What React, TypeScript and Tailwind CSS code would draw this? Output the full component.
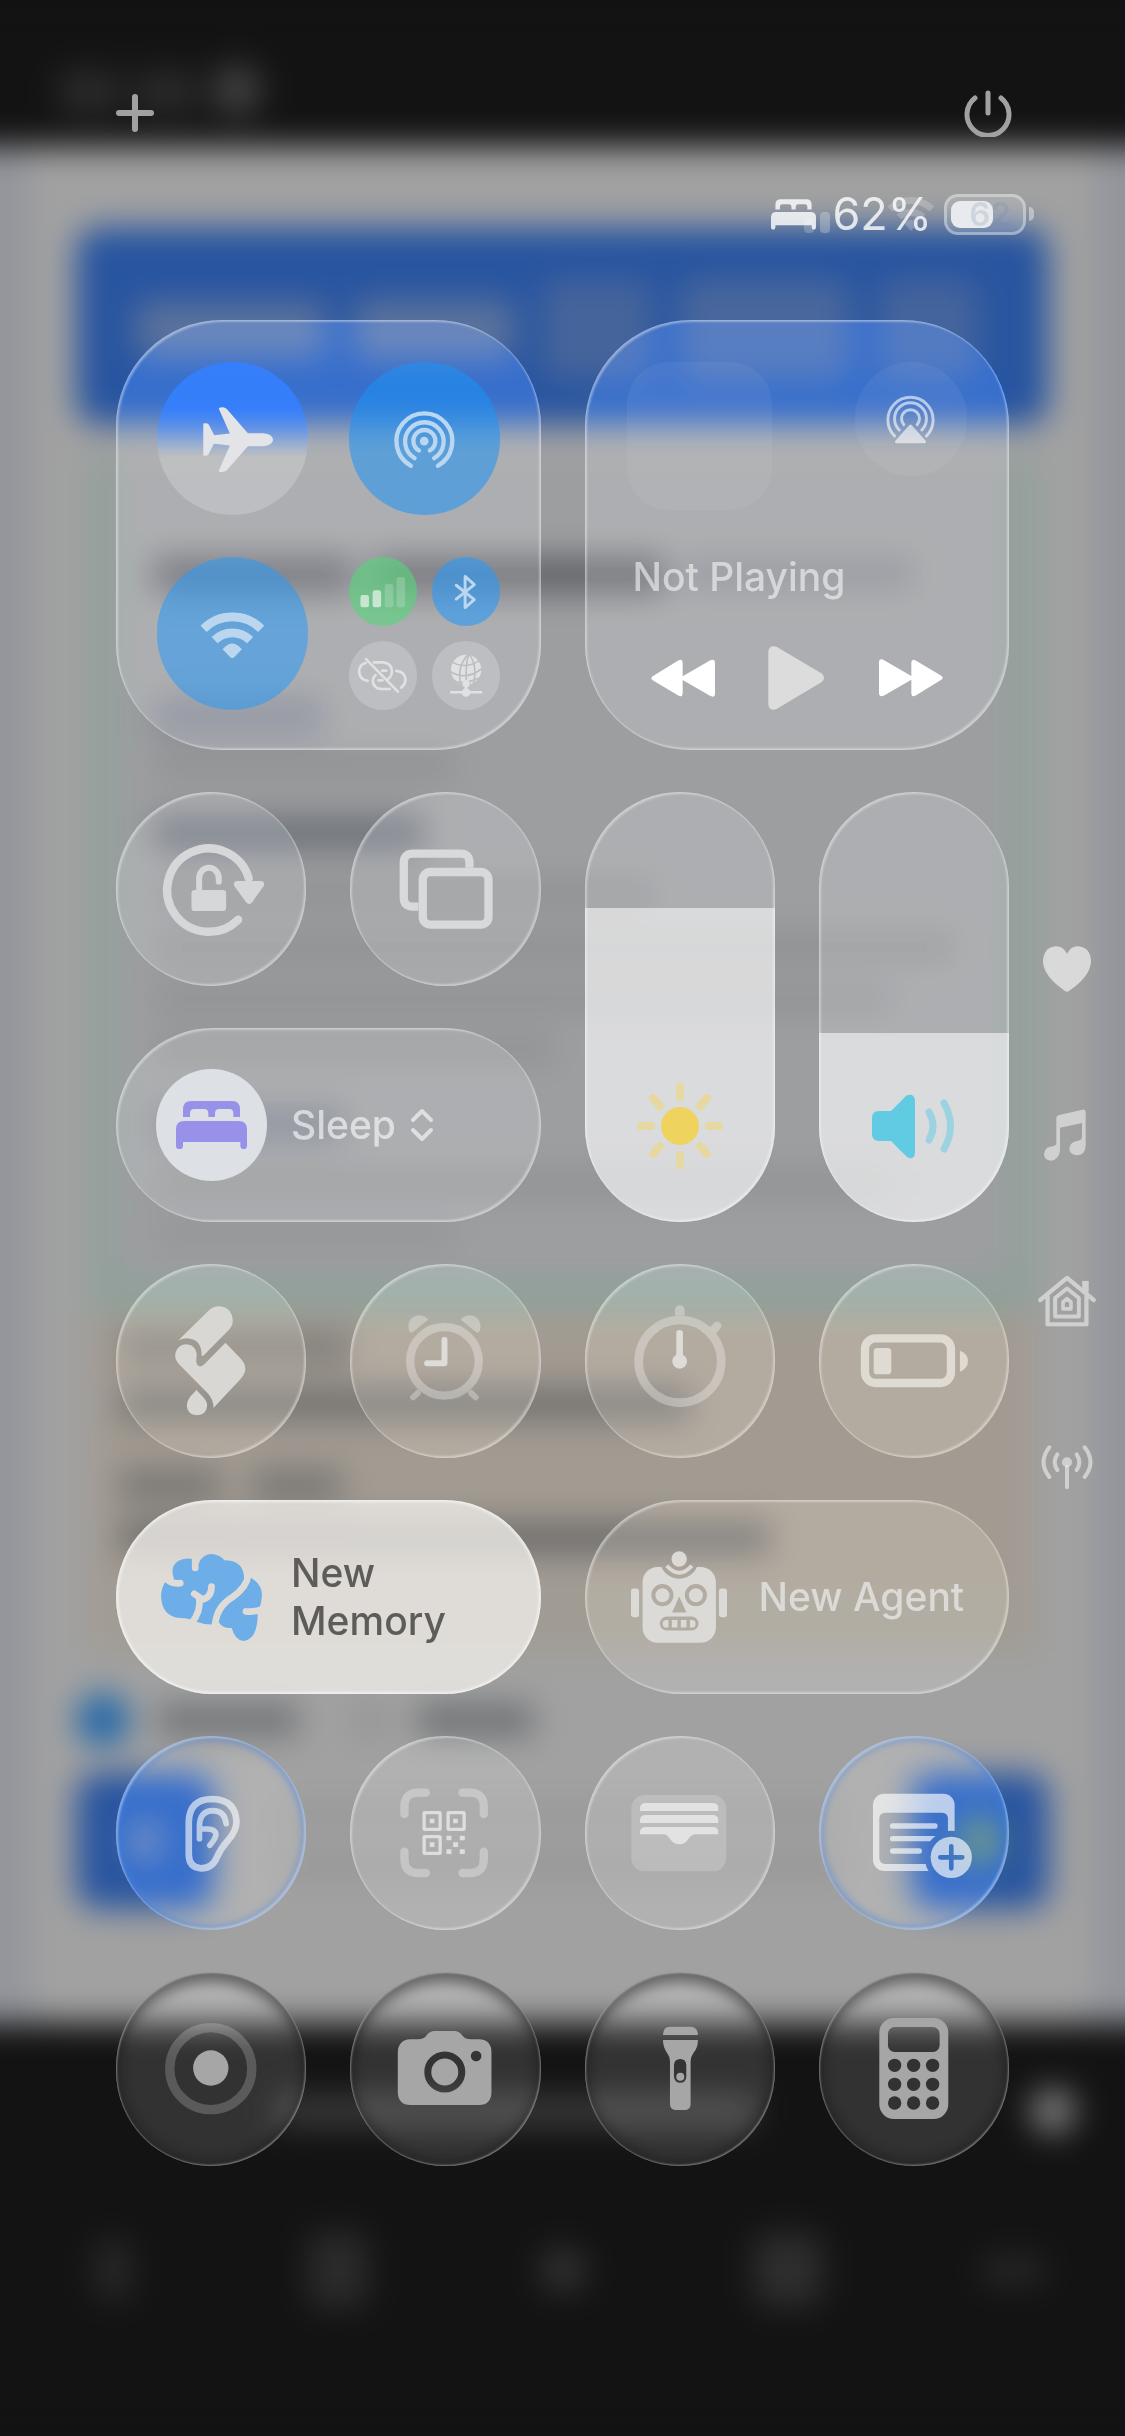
import React from "react";

const GLASS =
  "relative overflow-hidden bg-white/13 backdrop-saturate-[1.4] backdrop-brightness-[1.03] shadow-[inset_2px_2px_2px_rgba(255,255,255,0.35),inset_-2px_-2px_2px_rgba(255,255,255,0.35),inset_0_0_1px_1px_rgba(255,255,255,0.1)]";
const GLASS_BLUE =
  "relative overflow-hidden bg-white/13 backdrop-saturate-[1.4] backdrop-brightness-[1.03] shadow-[inset_2px_2px_2px_rgba(255,255,255,0.35),inset_-2px_-2px_2px_rgba(255,255,255,0.35),inset_0_0_8px_3px_rgba(70,130,225,0.6)]";
const GLASS_DARK =
  "relative overflow-hidden bg-white/13 backdrop-brightness-105 shadow-[inset_1px_1px_2px_rgba(255,255,255,0.4),inset_-1px_-1px_2px_rgba(255,255,255,0.4),inset_0_10px_14px_rgba(20,20,20,0.5),inset_0_-8px_12px_rgba(20,20,20,0.3)]";

const TONES = {
  light: `${GLASS} text-white/60`,
  blue: `${GLASS_BLUE} text-white/60`,
  dark: `${GLASS_DARK} text-[#a6a6a6]`,
};

function Icon({ box, className, children }: { box: string; className?: string; children: React.ReactNode }) {
  return (
    <svg viewBox={box} className={className ?? "h-full w-full"} fill="currentColor" aria-hidden="true">
      {children}
    </svg>
  );
}

function Stroke({ d, w, className }: { d: string; w: number; className?: string }) {
  return (
    <path d={d} fill="none" stroke="currentColor" strokeWidth={w} strokeLinecap="round" strokeLinejoin="round" className={className} />
  );
}

function Round({ label, tone = "light", children }: { label: string; tone?: keyof typeof TONES; children: React.ReactNode }) {
  return (
    <button type="button" aria-label={label} className={`h-[194px] w-full rounded-full ${TONES[tone]}`}>
      {children}
    </button>
  );
}

function Bed({ className }: { className: string }) {
  return (
    <Icon box="228 993 213 144" className={className}>
      <path d="M249 1041V1018Q249 993 274 993H396Q420 993 420 1018V1041H400V1030Q400 1017 388 1017H358Q345 1017 345 1030V1041H325V1030Q325 1017 312 1017H283Q270 1017 270 1030V1041Z" />
      <path d="M228 1127V1078Q228 1053 253 1053H416Q441 1053 441 1078V1127Q441 1137 431 1137Q421 1137 421 1127V1116H249V1127Q249 1137 238 1137Q228 1137 228 1127Z" />
    </Icon>
  );
}

function Backdrop() {
  return (
    <div aria-hidden="true" className="absolute inset-0 overflow-hidden bg-[#131313]">
      <div className="-mx-16 flex h-full flex-col bg-[#131313] blur-[16px]">
        <div className="flex h-[147px] shrink-0 items-end px-[122px] pb-[33px]">
          <div className="h-[44px] w-[64px] rounded-xl bg-[#2a2a2a]" />
          <div className="ml-3 h-[44px] w-[64px] rounded-xl bg-[#2a2a2a]" />
          <div className="ml-4 h-[48px] w-[46px] rounded-xl bg-[#404040]" />
        </div>
        <div className="h-[1876px] shrink-0 bg-[#93959c] px-[92px]">
          <div className="h-full rounded-b-[40px] bg-[#a1a1a1] px-[48px] pt-[80px]">
            <div className="flex h-[198px] items-center gap-7 rounded-[24px] bg-[#2855a0] px-[60px] pt-2">
              <div className="h-[56px] w-[190px] rounded-xl bg-[#5b729c]" />
              <div className="h-[60px] w-[160px] rounded-xl bg-[#5b729c]" />
              <div className="h-[100px] w-[110px] rounded-2xl bg-[#45649b]" />
              <div className="h-[100px] w-[170px] rounded-2xl bg-[#49679c]" />
              <div className="h-[100px] w-[100px] rounded-2xl bg-[#44649c]" />
            </div>
            <div className="mx-[14px] mt-[34px]">
              <div className="h-[852px] border-x-[26px] border-b-[34px] border-[#8fa19b] bg-[#9d9ea0] px-[38px] pt-[98px]">
                <div className="flex gap-5">
                  <div className="h-[36px] w-[200px] bg-[#66676d]" />
                  <div className="h-[36px] w-[290px] bg-[#626368]" />
                  <div className="h-[32px] w-[230px] bg-[#8a8c91]" />
                </div>
                <div className="mt-[104px] h-[38px] w-[170px] bg-[#848790]" />
                <div className="mt-[16px] h-[28px] w-[300px] bg-[#919294]" />
                <div className="mt-[36px] h-[36px] w-[270px] bg-[#6f737a]" />
                <div className="mt-[30px] h-[26px] w-[500px] bg-[#8f9092]" />
                <div className="mt-[26px] h-[28px] w-[800px] bg-[#8f9092]" />
                <div className="mt-[24px] h-[28px] w-[740px] bg-[#919294]" />
                <div className="mt-[22px] h-[28px] w-[400px] bg-[#919294]" />
                <div className="mt-[44px] h-[34px] w-[190px] bg-[#80848c]" />
                <div className="mt-[28px] h-[28px] w-[740px] bg-[#919294]" />
                <div className="mt-[24px] h-[28px] w-[300px] bg-[#959698]" />
              </div>
              <div className="h-[340px] bg-[#a29b92] px-[30px] pt-[22px]">
                <div className="h-[30px] w-[230px] bg-[#807e7a]" />
                <div className="mt-[24px] h-[34px] w-[570px] bg-[#747371]" />
                <div className="mt-[48px] flex gap-8">
                  <div className="h-[32px] w-[100px] bg-[#777673]" />
                  <div className="h-[32px] w-[90px] bg-[#777673]" />
                </div>
                <div className="mt-[20px] h-[34px] w-[650px] bg-[#6f6e6c]" />
                <div className="mt-[30px] h-[60px] bg-[#a09c94]" />
              </div>
            </div>
            <div className="mt-[42px] flex items-center">
              <div className="h-[54px] w-[54px] rounded-full bg-[#2468a8]" />
              <div className="ml-[28px] h-[32px] w-[140px] bg-[#727477]" />
              <div className="ml-[50px] h-[44px] w-[44px] rounded-full bg-[#979798]" />
              <div className="ml-[26px] h-[32px] w-[115px] bg-[#6f7174]" />
            </div>
            <div className="mt-[26px] flex justify-between">
              <div className="flex h-[136px] w-[138px] items-center justify-center rounded-[22px] bg-[#2855a0]">
                <div className="h-[36px] w-[30px] bg-[#6a7fa4]" />
              </div>
              <div className="flex w-[560px] flex-col justify-center gap-[24px]">
                <div className="h-[26px] bg-[#999999]" />
                <div className="h-[26px] bg-[#979797]" />
              </div>
              <div className="flex h-[136px] w-[138px] items-center justify-center rounded-[22px] bg-[#2855a0]">
                <div className="h-[50px] w-[44px] rounded-full bg-[#5f8277]" />
              </div>
            </div>
          </div>
        </div>
        <div className="flex-1 bg-[#131313] pt-[65px]">
          <div className="flex items-center pl-[340px]">
            <div className="h-[32px] w-[480px] bg-[#3a3a3a]" />
            <div className="ml-[274px] h-[46px] w-[46px] rounded-full bg-[#7c7c7c]" />
          </div>
          <div className="mt-[98px] grid grid-cols-5 items-center justify-items-center px-16">
            <div className="h-[60px] w-[36px] rounded-xl bg-[#282828]" />
            <div className="h-[76px] w-[60px] rounded-xl bg-[#2b2b2b]" />
            <div className="h-[46px] w-[46px] rounded-full bg-[#323232]" />
            <div className="h-[72px] w-[68px] rounded-xl bg-[#2e2e2e]" />
            <div className="h-[28px] w-[64px] rounded-xl bg-[#282828]" />
          </div>
        </div>
      </div>
    </div>
  );
}

function Connectivity() {
  return (
    <section
      aria-label="Connectivity"
      className={`col-span-2 row-span-2 grid grid-cols-2 grid-rows-2 gap-x-[41px] gap-y-[42px] rounded-[106px] px-[41px] pt-[42px] pb-[40px] ${GLASS}`}
    >
      <button
        type="button"
        aria-label="Airplane Mode"
        className="overflow-hidden rounded-full bg-linear-to-b from-[#3580ff]/90 from-30% to-white/20 to-62% text-[#e2e4e8]"
      >
        <Icon box="171 185 453 460">
          <path d="M520 419Q518 437 490 438H444L380 511Q374 517 358 515Q356 512 358 508L390 436L342 431L325 464Q320 468 310 466V370Q320 367 326 372L343 405L390 400L357 326Q356 320 370 321Q377 322 382 328L444 399H490Q518 401 520 419Z" />
        </Icon>
      </button>
      <button type="button" aria-label="AirDrop" className="overflow-hidden rounded-full bg-[#1e94f5]/55 text-[#b9d7f2]">
        <Icon box="747 185 453 460">
          <circle cx="973" cy="423" r="13" />
          <Stroke w={13} d="M957 451A33 33 0 1 1 990 451" />
          <Stroke w={13} d="M944 474A58 58 0 1 1 1003 474" />
          <Stroke w={13} d="M933 497A84 84 0 1 1 1014 497" />
        </Icon>
      </button>
      <button type="button" aria-label="Wi-Fi" className="overflow-hidden rounded-full bg-[#2a9af8]/55 text-[#bbd7ef]">
        <Icon box="171 770 453 460">
          <path d="M311 986A122 122 0 0 1 484 986M344 1020A76 76 0 0 1 451 1020" fill="none" stroke="currentColor" strokeWidth="26" />
          <path d="M368 1047Q397 1013 426 1047L402 1072Q397 1076 392 1072Z" />
        </Icon>
      </button>
      <div className="grid grid-cols-2 grid-rows-2 gap-[15px]">
        <button type="button" aria-label="Cellular Data" className="rounded-full bg-[#55d67a]/60 text-white">
          <Icon box="749 771 205 210">
            <g opacity="0.6">
              <rect x="783" y="887" width="26" height="37" rx="7" />
              <rect x="820" y="872" width="26" height="52" rx="7" />
            </g>
            <g opacity="0.18">
              <rect x="857" y="853" width="26" height="71" rx="7" />
              <rect x="893" y="832" width="26" height="92" rx="7" />
            </g>
          </Icon>
        </button>
        <button type="button" aria-label="Bluetooth" className="rounded-full bg-[#2a9af8]/60 text-[#bbd7ef]">
          <Icon box="999 771 205 210">
            <Stroke w={9} d="M1072 857L1127 901L1099 925V830L1127 855L1072 899" />
          </Icon>
        </button>
        <button type="button" aria-label="Personal Hotspot Off" className="rounded-full bg-white/20 text-[#e0e1e2]">
          <Icon box="749 1025 205 210">
            <Stroke w={8} d="M799 1092Q780 1096 779 1118Q781 1143 805 1146" />
            <Stroke w={8} d="M824 1090H852Q878 1092 879 1117Q878 1136 863 1143M849 1115H862M829 1129Q820 1136 821 1150Q826 1171 848 1171H872M838 1145H850" />
            <Stroke w={8} d="M892 1116Q918 1118 920 1142Q919 1158 907 1167" />
            <Stroke w={8} d="M800 1080L897 1179" />
          </Icon>
        </button>
        <button type="button" aria-label="VPN" className="rounded-full bg-white/20 text-[#e0e1e2]">
          <Icon box="999 1025 205 210">
            <mask id="globe">
              <circle cx="1102" cy="1113" r="46" fill="#fff" />
              <g fill="none" stroke="#000" strokeWidth="5">
                <path d="M1110 1064Q1070 1105 1088 1165M1110 1064Q1098 1100 1104 1165M1110 1064Q1140 1100 1122 1165" />
                <path d="M1060 1090Q1100 1112 1144 1084M1054 1118Q1100 1148 1152 1108M1062 1146Q1100 1160 1150 1134" />
              </g>
              <circle cx="1102" cy="1163" r="17" fill="#000" />
            </mask>
            <rect x="1050" y="1060" width="105" height="105" mask="url(#globe)" />
            <circle cx="1102" cy="1155" r="11" />
            <circle cx="1102" cy="1182" r="13" />
            <Stroke w={8} d="M1102 1155V1181M1057 1181H1148" />
          </Icon>
        </button>
      </div>
    </section>
  );
}

function Media() {
  return (
    <section aria-label="Media" className={`col-span-2 row-span-2 rounded-[106px] px-[42px] pt-[42px] text-white ${GLASS}`}>
      <div className="flex items-start justify-between">
        <div className="h-[148px] w-[145px] rounded-[42px] bg-white/5" />
        <button type="button" aria-label="AirPlay" className="h-[114px] w-[112px] rounded-full bg-white/5 text-white/60">
          <Icon box="885 189 337 342">
            <Stroke w={9} d="M1004 411A68 68 0 1 1 1100 411" />
            <Stroke w={9} d="M1018 393A48 48 0 1 1 1086 393" />
            <Stroke w={9} d="M1032 377A27 27 0 1 1 1072 377" />
            <path d="M1048 379Q1052 374 1056 379L1098 426Q1101 432 1094 433H1010Q1003 432 1006 426Z" />
          </Icon>
        </button>
      </div>
      <p className="mt-[43px] pl-[6px] text-[39px] leading-[48px] font-medium text-white/55">Not Playing</p>
      <div className="mt-[45px] flex items-center justify-between px-[24px]">
        <button type="button" aria-label="Rewind" className="h-[64px] w-[64px]">
          <Icon box="273 1037 190 190">
            <path d="M278 1127L354 1080Q366 1074 367 1086V1127L448 1080Q463 1073 463 1088V1178Q463 1192 448 1185L367 1138V1178Q366 1191 354 1184L278 1139Q270 1133 278 1127Z" />
          </Icon>
        </button>
        <button type="button" aria-label="Play" className="h-[64px] w-[57px] text-[#dcdcdc]">
          <Icon box="636 1039 169 192">
            <path d="M636 1057Q638 1034 662 1042L795 1121Q812 1134 795 1148L662 1227Q638 1237 636 1214Z" />
          </Icon>
        </button>
        <button type="button" aria-label="Fast Forward" className="h-[64px] w-[64px]">
          <Icon box="273 1037 190 190" className="h-full w-full rotate-180">
            <path d="M278 1127L354 1080Q366 1074 367 1086V1127L448 1080Q463 1073 463 1088V1178Q463 1192 448 1185L367 1138V1178Q366 1191 354 1184L278 1139Q270 1133 278 1127Z" />
          </Icon>
        </button>
      </div>
    </section>
  );
}

function Slider({ label, value, fill, children }: { label: string; value: number; fill: string; children: React.ReactNode }) {
  return (
    <div className={`row-span-2 flex flex-col justify-end rounded-full ${GLASS}`}>
      <div className={`flex flex-col items-center justify-end bg-white/55 pb-[53px] ${fill}`}>{children}</div>
      <input aria-label={label} type="range" min={0} max={100} defaultValue={value} className="absolute inset-0 h-full w-full opacity-0" />
    </div>
  );
}

function SideRail() {
  return (
    <nav aria-label="Pages" className="flex w-[116px] shrink-0 flex-col items-center gap-[106px] pt-[619px] text-white/50">
      <button type="button" aria-label="Favorites" className="flex h-[60px] w-[60px] items-center justify-center text-white/60">
        <Icon box="1452 529 144 138" className="h-[46px] w-[48px]">
          <path d="M1524 552Q1536 529 1558 530Q1596 534 1596 578Q1592 622 1530 664Q1524 668 1518 664Q1456 622 1452 578Q1452 534 1490 530Q1512 529 1524 552Z" />
        </Icon>
      </button>
      <button type="button" aria-label="Music" className="flex h-[60px] w-[60px] items-center justify-center pr-[4px]">
        <Icon box="1452 1016 126 156" className="h-[52px] w-[42px]">
          <path d="M1489 1044Q1489 1036 1498 1034L1567 1018Q1577 1016 1577 1027V1125Q1576 1154 1552 1155Q1528 1153 1528 1135Q1530 1116 1550 1112Q1566 1110 1566 1100V1058L1500 1072V1140Q1498 1168 1473 1171Q1452 1169 1452 1151Q1454 1132 1472 1129Q1489 1126 1489 1120Z" />
        </Icon>
      </button>
      <button type="button" aria-label="Home" className="flex h-[60px] w-[60px] items-center justify-center">
        <Icon box="1436 109 176 156" className="h-[52px] w-[58px]">
          <mask id="home">
            <g fill="none" stroke="#fff" strokeLinecap="round" strokeLinejoin="round">
              <path strokeWidth="13" d="M1443 184L1524 117L1605 184M1465 172V258H1583V172" />
              <path strokeWidth="20" strokeLinecap="butt" d="M1580 160V126" />
              <path strokeWidth="12" d="M1488 178L1524 149L1560 178V234H1488Z" />
              <path strokeWidth="11" d="M1512 190L1524 180L1536 190V211H1512Z" />
            </g>
          </mask>
          <rect x="1436" y="109" width="176" height="156" mask="url(#home)" />
        </Icon>
      </button>
      <button type="button" aria-label="Connectivity page" className="flex h-[60px] w-[60px] items-center justify-center">
        <Icon box="1442 612 160 138" className="h-[46px] w-[54px]">
          <circle cx="1522" cy="667" r="15" />
          <Stroke w={12} d="M1522 682V742M1493 643Q1477 667 1493 690M1551 643Q1567 667 1551 690M1469 622Q1434 667 1469 711M1575 622Q1610 667 1575 711" />
        </Icon>
      </button>
    </nav>
  );
}

export default function App() {
  return (
    <div className="relative min-h-screen overflow-hidden font-['Inter','Liberation_Sans',sans-serif]">
      <Backdrop />
      <div className="relative">
        <header className="px-[113px] pt-[88px]">
          <div className="flex h-[50px] items-center justify-between text-[#a1a1a1]">
            <button type="button" aria-label="Add a Control" className="h-[44px] w-[44px]">
              <Icon box="0 0 44 44">
                <Stroke w={6} d="M22 6V38M6 22H38" />
              </Icon>
            </button>
            <button type="button" aria-label="Power" className="h-[48px] w-[48px]">
              <Icon box="0 0 48 48">
                <Stroke w={5} d="M11 9A21 21 0 1 0 37 9M24 4V24" />
              </Icon>
            </button>
          </div>
        </header>
        <div className="mt-[50px] flex h-[52px] items-center justify-end pr-[91px] text-white/80">
          <Bed className="h-[31px] w-[45px]" />
          <div className="-ml-3 flex items-end gap-[6px] pt-[16px]">
            <span className="h-[14px] w-[10px] rounded-sm bg-white/20" />
            <span className="h-[21px] w-[10px] rounded-sm bg-white/25" />
          </div>
          <div className="relative ml-[2px]">
            <span className="text-[45px] leading-[52px]">62%</span>
            <Icon box="0 0 48 38" className="absolute top-[6px] right-[-3px] h-[38px] w-[48px] text-white/20">
              <path d="M3 15A30 30 0 0 1 45 15M12 23A18 18 0 0 1 36 23" fill="none" stroke="currentColor" strokeWidth="7" />
              <path d="M17 29Q24 23 31 29L24 37Z" />
            </Icon>
          </div>
          <div className="relative ml-[12px] flex h-[41px] w-[82px] items-center rounded-[14px] border-[3px] border-white/35 bg-white/15 pl-[4px]">
            <span className="h-[27px] w-[42px] rounded-[9px] bg-[#e8eaed]" />
            <span className="absolute top-0 right-[12px] text-[33px] leading-[35px] font-semibold text-[#6e83aa]/20">62</span>
          </div>
          <div className="ml-[3px] h-[14px] w-[5px] rounded-r-full bg-white/40" />
        </div>
        <div className="mt-[80px] flex pl-[116px]">
          <main className="grid flex-1 auto-rows-[194px] grid-cols-4 gap-x-[44px] gap-y-[42px] pb-[270px]">
            <Connectivity />
            <Media />

            <Round label="Orientation Lock">
              <Icon box="48 66 570 582" className="h-full w-full text-[#d6d7d9]">
                <Stroke w={25} d="M414 449A125 125 0 1 1 446 325" />
                <path d="M410 333H484Q497 337 490 349L456 397Q447 408 438 397L403 349Q396 337 410 333Z" />
                <rect x="274" y="360" width="104" height="63" rx="10" />
                <Stroke w={18} d="M297 364V325A29 31 0 0 1 356 325V335" />
              </Icon>
            </Round>
            <Round label="Screen Mirroring">
              <Icon box="752 66 570 582" className="h-full w-full text-[#d8d9da]">
                <g fill="none" stroke="currentColor" strokeWidth="25">
                  <rect x="970" y="306" width="197" height="158" rx="23" />
                  <path d="M957 410H940Q913 410 913 383V278Q913 251 940 251H1083Q1110 251 1110 278V293" />
                </g>
              </Icon>
            </Round>
            <Slider label="Brightness" value={73} fill="h-[73%]">
              <Icon box="0 0 86 86" className="h-[86px] w-[86px] shrink-0">
                <circle cx="43" cy="43" r="19" fill="#eed35f" />
                <g stroke="#e5d8a0" strokeWidth="8" strokeLinecap="round">
                  <path d="M43 4V14M43 72V82M4 43H14M72 43H82M16 15L23 23M70 15L63 23M16 71L23 63M70 71L63 63" />
                </g>
              </Icon>
            </Slider>
            <Slider label="Volume" value={44} fill="h-[44%]">
              <Icon box="0 0 86 86" className="h-[86px] w-[86px] shrink-0">
                <path d="M1 35Q1 28 8 28H20L35 13Q38 11 41 12Q44 14 44 18V69Q44 74 41 75Q38 76 35 73L20 58H8Q1 58 1 51Z" fill="#61cbe3" />
                <path d="M58 29Q66 43 58 57M73 20Q86 43 73 66" fill="none" stroke="#9dd3e0" strokeWidth="7" strokeLinecap="round" />
              </Icon>
            </Slider>
            <button type="button" className={`col-span-2 flex items-center rounded-full pl-[40px] text-white/60 ${GLASS}`}>
              <span className="flex h-[112px] w-[111px] items-center justify-center rounded-full bg-[#dde0e4]">
                <Bed className="h-[48px] w-[71px] text-[#9791ea]" />
              </span>
              <span className="ml-[24px] text-[39px] leading-[48px] font-medium">Sleep</span>
              <Icon box="0 0 24 34" className="ml-[14px] h-[34px] w-[24px]">
                <Stroke w={4} d="M3 12L12 3L21 12M3 22L12 31L21 22" />
              </Icon>
            </button>

            <Round label="Shortcuts">
              <Icon box="48 71 570 582" className="h-full w-full text-[#d8d7d4]">
                <path d="M235 300L322 214Q338 198 357 198Q396 201 398 242Q397 258 385 270L311 345Q303 351 304 335Q300 295 258 294Q245 295 235 300Z" />
                <path d="M376 307L422 355Q449 384 422 415L340 503Q341 478 322 458L236 371Q222 355 226 338Q233 312 260 312Q288 316 290 342L288 362Q290 380 303 378Q310 375 314 370Z" />
                <path d="M289 449L311 472Q322 485 321 497Q318 524 291 525Q262 523 260 496Q261 480 270 469Z" />
              </Icon>
            </Round>
            <Round label="Alarm">
              <Icon box="752 71 570 582">
                <g opacity="0.5">
                  <circle cx="1035" cy="363" r="103" fill="none" stroke="currentColor" strokeWidth="25" />
                  <path d="M934 277Q926 274 927 252Q932 226 960 225Q977 226 986 238L943 273Q938 278 934 277Z" />
                  <path d="M1136 277Q1144 274 1143 252Q1138 226 1110 225Q1093 226 1084 238L1127 273Q1132 278 1136 277Z" />
                  <Stroke w={18} d="M941 471L955 458M1129 471L1115 458" />
                </g>
                <Stroke w={18} className="text-[#dddcd8]" d="M1035 299V369H983" />
              </Icon>
            </Round>
            <Round label="Stopwatch">
              <Icon box="74 71 571 582">
                <g opacity="0.5">
                  <circle cx="359" cy="363" r="124" fill="none" stroke="currentColor" strokeWidth="26" />
                  <path d="M344 226V209Q345 195 359 195Q372 195 373 209V226Z" />
                  <path d="M449 262L461 248Q471 239 480 248Q488 256 479 266L467 280Z" />
                </g>
                <Stroke w={20} className="text-[#dddcd8]" d="M358 279V363" />
                <circle cx="358" cy="363" r="22" className="text-[#dddcd8]" />
              </Icon>
            </Round>
            <Round label="Low Power Mode">
              <Icon box="777 71 571 582" className="h-full w-full text-[#dfdbd2]">
                <rect x="915" y="294" width="258" height="134" rx="32" fill="none" stroke="currentColor" strokeWidth="25" />
                <rect x="941" y="323" width="53" height="79" rx="11" />
                <path d="M1200 331Q1224 340 1224 362Q1224 385 1200 394Z" />
              </Icon>
            </Round>

            <button
              type="button"
              className="relative col-span-2 flex items-center overflow-hidden rounded-full bg-[#f4f2ee]/75 pl-[45px] text-left text-[#5d5c5a] shadow-[inset_0_0_3px_2px_rgba(255,255,255,0.6)]"
            >
              <Icon box="183 938 304 262" className="h-[87px] w-[101px] shrink-0 text-[#6daee8]">
                <mask id="brain">
                  <rect x="183" y="938" width="304" height="262" fill="#fff" />
                  <g fill="none" stroke="#000" strokeWidth="20" strokeLinecap="round">
                    <path d="M286 930V980" />
                    <path d="M186 1000Q210 1031 241 1026" />
                    <path d="M335 1036Q335 1068 308 1075L283 1058" />
                    <path d="M298 1070Q304 1112 274 1148" />
                    <path d="M446 1000Q442 1037 398 1068Q345 1100 345 1165" />
                    <path d="M490 1104Q460 1114 439 1111" />
                  </g>
                </mask>
                <path
                  mask="url(#brain)"
                  d="M222 1013Q205 965 250 953Q265 950 278 953L296 968Q307 938 337 938Q360 940 374 957Q432 957 433 1010L455 1010Q487 1030 487 1062Q484 1098 474 1110Q476 1195 431 1200Q405 1197 396 1161Q370 1163 358 1145L334 1150Q310 1150 288 1141Q270 1132 240 1131Q185 1125 183 1065Q183 1040 199 1016Z"
                />
              </Icon>
              <span className="ml-[29px] text-[39px] leading-[48px] font-medium">
                New
                <br />
                Memory
              </span>
            </button>
            <button type="button" className={`col-span-2 flex items-center rounded-full pl-[46px] text-[#dcdad6] ${GLASS}`}>
              <Icon box="214 920 287 275" className="h-[92px] w-[96px] shrink-0">
                <mask id="robot">
                  <rect x="248" y="968" width="220" height="226" rx="46" fill="#fff" />
                  <circle cx="358" cy="945" r="58" fill="#000" />
                  <g fill="none" stroke="#000" strokeWidth="12">
                    <circle cx="308" cy="1052" r="27" />
                    <circle cx="408" cy="1052" r="27" />
                  </g>
                  <path d="M358 1056L380 1104H337Z" fill="#000" />
                  <rect x="300" y="1116" width="116" height="42" rx="21" fill="#000" />
                  <rect x="309" y="1126" width="98" height="23" rx="11" fill="#fff" />
                  <path d="M331 1124V1151M358 1124V1151M385 1124V1151" stroke="#000" strokeWidth="10" />
                </mask>
                <rect x="248" y="960" width="220" height="240" mask="url(#robot)" />
                <rect x="214" y="1032" width="24" height="86" rx="8" />
                <rect x="477" y="1032" width="24" height="86" rx="8" />
                <circle cx="358" cy="944" r="23" />
                <path d="M321 964Q358 1006 396 964" fill="none" stroke="currentColor" strokeWidth="12" />
              </Icon>
              <span className="ml-[32px] text-[39px] leading-[48px] font-medium">New Agent</span>
            </button>

            <Round label="Hearing" tone="blue">
              <Icon box="48 75 570 582">
                <mask id="ear">
                  <g fill="none" stroke="#fff" strokeLinecap="round" strokeLinejoin="round">
                    <path strokeWidth="20" d="M266 332Q268 264 337 264Q407 266 409 333Q409 360 382 390Q362 412 350 440Q336 472 303 472Q266 470 266 430Z" />
                    <path strokeWidth="17" d="M378 338Q374 299 338 299Q299 300 298 345V383M298 354H320Q350 354 347 374Q344 386 329 403" />
                  </g>
                </mask>
                <rect x="250" y="250" width="175" height="240" mask="url(#ear)" />
              </Icon>
            </Round>
            <Round label="Scan Code">
              <Icon box="752 75 570 582">
                <Stroke w={25} className="opacity-50" d="M915 309V287Q915 245 957 245H979M1089 245H1111Q1153 245 1153 287V309M1153 422V444Q1153 486 1111 486H1089M979 486H957Q915 486 915 444V422" />
                <g fill="none" stroke="currentColor" strokeWidth="10">
                  <rect x="974" y="305" width="48" height="50" rx="2" />
                  <rect x="1046" y="305" width="48" height="50" rx="2" />
                  <rect x="974" y="377" width="48" height="50" rx="2" />
                </g>
                <path d="M991 323h14v14h-14zM1061 323h14v14h-14zM991 394h14v14h-14zM1041 374h15v14h-15zM1081 374h15v14h-15zM1061 394h15v14h-15zM1041 415h15v14h-15zM1081 415h15v14h-15z" />
              </Icon>
            </Round>
            <Round label="Wallet">
              <Icon box="74 75 571 582">
                <rect x="213" y="252" width="285" height="229" rx="40" opacity="0.3" />
                <g className="text-[#e2e2e2]">
                  <path fill="currentColor" d="M239 300V290Q241 276 255 276H458Q473 276 474 290V300ZM239 336V326Q241 312 255 312H458Q473 312 474 326V336Z" />
                  <path fill="currentColor" d="M239 370V362Q241 348 255 348H458Q473 348 474 362V370H404Q392 371 384 385Q374 400 357 400Q340 400 330 385Q322 371 311 370Z" />
                </g>
              </Icon>
            </Round>
            <Round label="Quick Note" tone="blue">
              <Icon box="777 75 571 582" className="h-full w-full text-white/65">
                <mask id="note">
                  <rect x="939" y="248" width="245" height="232" rx="34" fill="#fff" />
                  <rect x="958" y="305" width="206" height="154" rx="17" fill="#000" />
                  <path d="M998 345H1125M998 383H1125M998 420H1078" stroke="#fff" strokeWidth="16" strokeLinecap="round" />
                  <circle cx="1174" cy="439" r="80" fill="#000" />
                  <circle cx="1174" cy="439" r="62" fill="#fff" />
                  <path d="M1174 406V472M1141 439H1207" stroke="#000" strokeWidth="14" strokeLinecap="round" />
                </mask>
                <rect x="930" y="240" width="320" height="270" mask="url(#note)" />
              </Icon>
            </Round>

            <Round label="Screen Recording" tone="dark">
              <Icon box="48 783 570 582">
                <circle cx="332" cy="1073" r="123" fill="none" stroke="#fff" strokeOpacity="0.2" strokeWidth="28" />
                <circle cx="332" cy="1071" r="53" />
              </Icon>
            </Round>
            <Round label="Camera" tone="dark">
              <Icon box="752 783 570 582">
                <mask id="camera">
                  <path fill="#fff" d="M895 1023Q897 987 932 985H955Q971 985 980 975Q990 960 1006 960H1064Q1080 960 1090 975Q1098 985 1115 985H1140Q1175 987 1176 1023V1145Q1174 1181 1140 1182H932Q897 1181 895 1145Z" />
                  <circle cx="1036" cy="1083" r="51" fill="none" stroke="#000" strokeWidth="21" />
                  <circle cx="1130" cy="1035" r="16" fill="#000" />
                </mask>
                <rect x="890" y="950" width="290" height="240" mask="url(#camera)" />
              </Icon>
            </Round>
            <Round label="Flashlight" tone="dark">
              <Icon box="74 783 571 582">
                <path d="M308 972Q309 947 328 947H393Q412 948 413 972Z" />
                <path
                  fillRule="evenodd"
                  d="M308 987H413Q413 1010 400 1025Q391 1037 391 1050V1180Q390 1196 376 1197H345Q330 1196 329 1180V1050Q329 1037 320 1025Q308 1008 308 987ZM341 1063V1097Q343 1115 360 1115Q377 1115 378 1097V1063Q377 1044 360 1044Q342 1044 341 1063Z"
                />
                <circle cx="360" cy="1097" r="12" />
              </Icon>
            </Round>
            <Round label="Calculator" tone="dark">
              <Icon box="777 783 571 582">
                <mask id="calculator">
                  <rect x="958" y="921" width="207" height="303" rx="44" fill="#fff" />
                  <rect x="984" y="948" width="155" height="75" rx="20" fill="#000" />
                  {[1063, 1120, 1176].map((y) => [1004, 1061, 1118].map((x) => <circle key={`${x}-${y}`} cx={x} cy={y} r="20" fill="#000" />))}
                </mask>
                <rect x="950" y="915" width="220" height="315" mask="url(#calculator)" />
              </Icon>
            </Round>
          </main>
          <SideRail />
        </div>
      </div>
    </div>
  );
}
